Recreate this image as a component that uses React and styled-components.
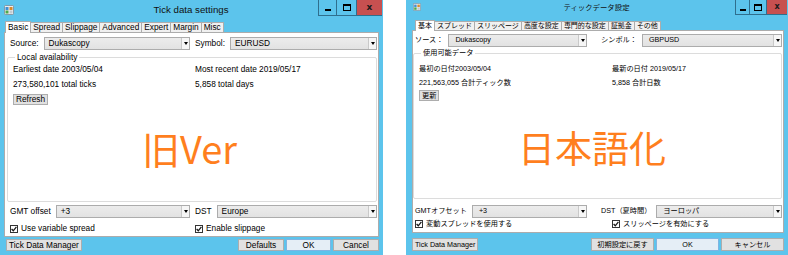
import styled, { createGlobalStyle } from 'styled-components';

const GlobalStyle = createGlobalStyle`
  html, body { margin: 0; padding: 0; background: #fff; }
  body { font-family: "Liberation Sans", "Noto Sans CJK JP", sans-serif; color: #000; }
  * { box-sizing: border-box; }
`;

const Page = styled.div`
  display: flex;
  justify-content: space-between;
  width: 788px;
  height: 255px;
  overflow: hidden;
`;

const Frame = styled.div`
  width: ${p => p.$w}px;
  height: 255px;
  display: flex;
  flex-direction: column;
  background: #5cc4ec;
  padding: 0 ${p => p.$br}px 3px ${p => p.$bl}px;
  font-size: ${p => p.$fs}px;
  line-height: 1.2;
`;

const TitleBar = styled.div`
  display: grid;
  grid-template-columns: 1fr auto 1fr;
  height: ${p => p.$h}px;
  margin: 0 ${p => 1 - p.$br}px 0 ${p => -p.$bl}px;
`;

const AppIcon = styled.svg`
  justify-self: start;
  margin: ${p => p.$top}px 0 0 ${p => p.$left}px;
`;

const Title = styled.div`
  align-self: center;
  font-size: ${p => p.$fs}px;
  padding-bottom: ${p => p.$pb}px;
  color: #111;
  white-space: nowrap;
`;

const WinButtons = styled.div`
  justify-self: end;
  display: flex;
  height: ${p => p.$h}px;
`;

const WinBtn = styled.div`
  width: ${p => p.$w}px;
  height: 100%;
  display: flex;
  align-items: center;
  justify-content: center;
  border-left: 1px solid #2f6f8e;
  border-bottom: 1px solid #2f6f8e;
  background: ${p => (p.$close ? '#c75050' : 'transparent')};
  font-family: "DejaVu Sans", sans-serif;
  font-weight: bold;
  font-size: ${p => p.$glyph}px;
  color: #1b1b1b;
`;

const MinGlyph = styled.span`
  width: 6px;
  height: 2px;
  margin-top: 5px;
  background: #000;
`;

const MaxGlyph = styled.span`
  width: 8px;
  height: 7px;
  border: 1px solid #000;
  border-top-width: 2px;
`;

const TabStrip = styled.div`
  display: flex;
  align-items: flex-end;
  height: ${p => p.$h}px;
  margin-bottom: -1px;
  padding-left: ${p => p.$pl}px;
  position: relative;
  z-index: 1;
  font-size: ${p => p.$fs}px;
`;

const Tab = styled.div`
  height: ${p => (p.$active ? p.$h : p.$h - 2)}px;
  margin-bottom: ${p => (p.$active ? 0 : 1)}px;
  margin-right: -1px;
  padding: 0 ${p => p.$pad}px;
  display: flex;
  align-items: center;
  border: 1px solid #acacac;
  border-bottom: none;
  background: ${p => (p.$active ? '#fff' : '#f0f0f0')};
  white-space: nowrap;
  position: relative;
  z-index: ${p => (p.$active ? 2 : 1)};
`;

const Panel = styled.div`
  flex: 1;
  display: flex;
  flex-direction: column;
  min-height: 0;
  background: #fff;
  border: 1px solid #acacac;
  padding: 0 1px ${p => p.$pb}px ${p => p.$pl}px;
`;

const Row = styled.div`
  display: grid;
  grid-template-columns: ${p => p.$cols};
  column-gap: ${p => p.$gap}px;
  align-items: center;
  height: ${p => p.$h}px;
  margin-top: ${p => p.$mt}px;
  padding-left: ${p => p.$pl}px;
  white-space: nowrap;
`;

const Field = styled.div`
  display: flex;
  align-items: center;
  gap: ${p => p.$gap}px;
  min-width: 0;
`;

const Combo = styled.div`
  flex: 1;
  height: 13px;
  display: flex;
  align-items: center;
  justify-content: space-between;
  padding-left: ${p => p.$pl}px;
  background: linear-gradient(#ececec, #e2e2e2);
  border: 1px solid #acacac;
`;

const DropBtn = styled.span`
  width: 8px;
  height: 11px;
  display: flex;
  align-items: center;
  justify-content: center;
  background: #f6f6f6;
  border-left: 1px solid #c9c9c9;

  &::after {
    content: '';
    border-left: 2.5px solid transparent;
    border-right: 2.5px solid transparent;
    border-top: 3px solid #000;
  }
`;

const Group = styled.fieldset`
  flex: 1;
  min-height: 0;
  display: flex;
  flex-direction: column;
  margin: ${p => p.$mt}px 0 0 0;
  padding: 0 0 0 ${p => p.$pl}px;
  border: 1px solid #dcdcdc;
  border-radius: 2px;
`;

const Legend = styled.legend`
  padding: 0 2px;
  margin-left: 2px;
  line-height: 10px;
`;

const InfoGrid = styled.div`
  display: grid;
  grid-template-columns: ${p => p.$split}px 1fr;
  line-height: ${p => p.$lh}px;
  padding-top: ${p => p.$pt}px;
  white-space: nowrap;
`;

const Button = styled.button`
  height: ${p => p.$h}px;
  width: ${p => (p.$w ? `${p.$w}px` : 'auto')};
  padding: 0 2px;
  font: inherit;
  line-height: 1;
  color: #000;
  background: ${p => (p.$default ? '#e5eef6' : '#e1e1e1')};
  border: 1px solid ${p => (p.$default ? '#7fb4e2' : '#adadad')};
  border-radius: 0;
  white-space: nowrap;
`;

const SmallButton = styled(Button)`
  align-self: flex-start;
  margin-top: ${p => p.$mt}px;
`;

const BigText = styled.div`
  flex: 1;
  display: flex;
  align-items: center;
  justify-content: center;
  padding: 0 ${p => p.$pr}px ${p => p.$pb}px 0;
  font-family: "Noto Sans CJK JP", sans-serif;
  font-size: ${p => p.$fs}px;
  color: #ff7f1e;
  line-height: 1;
`;

const Check = styled.label`
  display: flex;
  align-items: center;
  gap: 3px;
`;

const Box = styled.span`
  width: 8px;
  height: 8px;
  display: flex;
  align-items: center;
  justify-content: center;
  border: 1px solid #333;
  background: #fff;
`;

const BottomBar = styled.div`
  display: flex;
  align-items: flex-start;
  justify-content: space-between;
  height: ${p => p.$h}px;
  padding: ${p => p.$pt}px 0 0 ${p => p.$pl}px;
`;

const ButtonGroup = styled.div`
  display: flex;
  gap: 2px;
`;

const CheckMark = () => (
  <svg width="6" height="6" viewBox="0 0 6 6">
    <path d="M0.6 3 L2.3 4.8 L5.4 0.9" fill="none" stroke="#1a1a1a" strokeWidth="1.3" />
  </svg>
);

const Icon = ({ size, top, left }) => (
  <AppIcon $top={top} $left={left} width={size} height={size} viewBox="0 0 10 10">
    <rect x="0.5" y="0.5" width="9" height="9" rx="1" fill="#e9eef2" stroke="#7c8b96" strokeWidth="0.8" />
    <rect x="1.5" y="2" width="3" height="3" fill="#3f8fd2" />
    <rect x="5.5" y="2" width="3" height="3" fill="#d98a2b" />
    <rect x="1.5" y="5.5" width="3" height="3" fill="#4fa84a" />
    <rect x="5.5" y="5.5" width="3" height="3" fill="#c2c9cf" />
  </AppIcon>
);

const Window = ({ m, t }) => (
  <Frame $w={m.w} $bl={m.bl} $br={m.br} $fs={m.fs}>
    <TitleBar $h={m.titleH} $bl={m.bl} $br={m.br}>
      <Icon size={m.iconSize} top={m.iconTop} left={m.iconLeft} />
      <Title $fs={m.titleFs} $pb={m.titlePb}>{t.title}</Title>
      <WinButtons $h={m.winBtnH}>
        <WinBtn $w={m.winBtns[0]}><MinGlyph /></WinBtn>
        <WinBtn $w={m.winBtns[1]}><MaxGlyph /></WinBtn>
        <WinBtn $w={m.winBtns[2]} $close $glyph={m.closeFs}>x</WinBtn>
      </WinButtons>
    </TitleBar>

    <TabStrip $h={m.tabH} $pl={m.tabPl} $fs={m.tabFs}>
      {t.tabs.map((tab, i) => (
        <Tab key={tab} $active={i === 0} $h={m.tabH} $pad={m.tabPad}>{tab}</Tab>
      ))}
    </TabStrip>

    <Panel $pl={m.panelPl} $pb={m.panelPb}>
      <Row $cols={m.rowCols} $gap={m.rowGap} $h={13} $mt={m.srcMt} $pl={m.rowPl}>
        <Field $gap={m.fieldGap}>
          {t.source}
          <Combo $pl={m.comboPl}>Dukascopy<DropBtn /></Combo>
        </Field>
        <Field $gap={m.fieldGap}>
          {t.symbol}
          <Combo $pl={m.comboPl}>{t.symbolValue}<DropBtn /></Combo>
        </Field>
      </Row>

      <Group $mt={m.groupMt} $pl={m.groupPl}>
        <Legend>{t.group}</Legend>
        <InfoGrid $split={m.infoSplit} $lh={m.infoLh} $pt={m.infoPt}>
          <span>{t.earliest}</span>
          <span>{t.recent}</span>
          <span>{t.ticks}</span>
          <span>{t.days}</span>
        </InfoGrid>
        <SmallButton $h={11} $mt={m.refreshMt}>{t.refresh}</SmallButton>
        <BigText $fs={m.bigFs} $pr={m.bigPr} $pb={m.bigPb}>{t.big}</BigText>
      </Group>

      <Row $cols={m.rowCols} $gap={m.rowGap} $h={13} $mt={m.gmtMt} $pl={m.rowPl}>
        <Field $gap={m.fieldGap}>
          {t.gmt}
          <Combo $pl={m.comboPl}>+3<DropBtn /></Combo>
        </Field>
        <Field $gap={m.fieldGap}>
          {t.dst}
          <Combo $pl={m.comboPl}>{t.dstValue}<DropBtn /></Combo>
        </Field>
      </Row>

      <Row $cols={`${m.chkSplit}px 1fr`} $gap={0} $h={12} $mt={m.chkMt} $pl={m.rowPl}>
        <Check><Box><CheckMark /></Box>{t.spread}</Check>
        <Check><Box><CheckMark /></Box>{t.slippage}</Check>
      </Row>
    </Panel>

    <BottomBar $h={m.bottomH} $pt={m.bottomPt} $pl={m.bottomPl}>
      <Button $h={m.btnH} $fs={m.fs}>Tick Data Manager</Button>
      <ButtonGroup>
        <Button $h={m.btnH} $w={m.btnW[0]}>{t.defaults}</Button>
        <Button $h={m.btnH} $w={m.btnW[1]} $default>OK</Button>
        <Button $h={m.btnH} $w={m.btnW[2]}>{t.cancel}</Button>
      </ButtonGroup>
    </BottomBar>
  </Frame>
);

const oldMetrics = {
  w: 383, bl: 4, br: 4, fs: 8.3,
  titleH: 21, titleFs: 9.7, titlePb: 1, iconSize: 10, iconTop: 5, iconLeft: 4,
  winBtns: [18, 20, 26], winBtnH: 16, closeFs: 9,
  tabH: 12, tabPl: 1, tabFs: 8.3, tabPad: 2,
  panelPl: 2, panelPb: 1,
  rowCols: '180px 1fr', rowGap: 5, rowPl: 3, fieldGap: 5, comboPl: 4,
  srcMt: 4, groupMt: 2, groupPl: 5,
  infoSplit: 182, infoLh: 15, infoPt: 0, refreshMt: 2,
  bigFs: 38, bigPr: 10, bigPb: 10,
  gmtMt: 3, chkMt: 5, chkSplit: 185,
  bottomH: 15, bottomPt: 2, bottomPl: 2, btnH: 12, btnW: [46, 45, 46],
};

const jpMetrics = {
  w: 382, bl: 6, br: 4, fs: 7.2,
  titleH: 20, titleFs: 7.4, titlePb: 4, iconSize: 8, iconTop: 3, iconLeft: 7,
  winBtns: [14, 17, 21], winBtnH: 15, closeFs: 8,
  tabH: 11, tabPl: 3, tabFs: 7, tabPad: 2,
  panelPl: 0, panelPb: 2,
  rowCols: '172px 1fr', rowGap: 14, rowPl: 2, fieldGap: 5, comboPl: 6,
  srcMt: 3, groupMt: 1, groupPl: 5,
  infoSplit: 193, infoLh: 14, infoPt: 4, refreshMt: 0,
  bigFs: 37, bigPr: 16, bigPb: 4,
  gmtMt: 6, chkMt: 0, chkSplit: 197,
  bottomH: 19, bottomPt: 5, bottomPl: 0, btnH: 13, btnW: [63, 63, 63],
};

const oldText = {
  title: 'Tick data settings',
  tabs: ['Basic', 'Spread', 'Slippage', 'Advanced', 'Expert', 'Margin', 'Misc'],
  source: 'Source:', symbol: 'Symbol:', symbolValue: 'EURUSD',
  group: 'Local availability',
  earliest: 'Earliest date 2003/05/04', recent: 'Most recent date 2019/05/17',
  ticks: '273,580,101 total ticks', days: '5,858 total days',
  refresh: 'Refresh', big: '旧Ver',
  gmt: 'GMT offset', dst: 'DST', dstValue: 'Europe',
  spread: 'Use variable spread', slippage: 'Enable slippage',
  defaults: 'Defaults', cancel: 'Cancel',
};

const jpText = {
  title: 'ティックデータ設定',
  tabs: ['基本', 'スプレッド', 'スリッページ', '高度な設定', '専門的な設定', '証拠金', 'その他'],
  source: 'ソース：', symbol: 'シンボル：', symbolValue: 'GBPUSD',
  group: '使用可能データ',
  earliest: '最初の日付2003/05/04', recent: '最新の日付 2019/05/17',
  ticks: '221,563,055 合計ティック数', days: '5,858 合計日数',
  refresh: '更新', big: '日本語化',
  gmt: 'GMTオフセット', dst: 'DST（夏時間）', dstValue: 'ヨーロッパ',
  spread: '変動スプレッドを使用する', slippage: 'スリッページを有効にする',
  defaults: '初期設定に戻す', cancel: 'キャンセル',
};

export default function App() {
  return (
    <>
      <GlobalStyle />
      <Page>
        <Window m={oldMetrics} t={oldText} />
        <Window m={jpMetrics} t={jpText} />
      </Page>
    </>
  );
}
